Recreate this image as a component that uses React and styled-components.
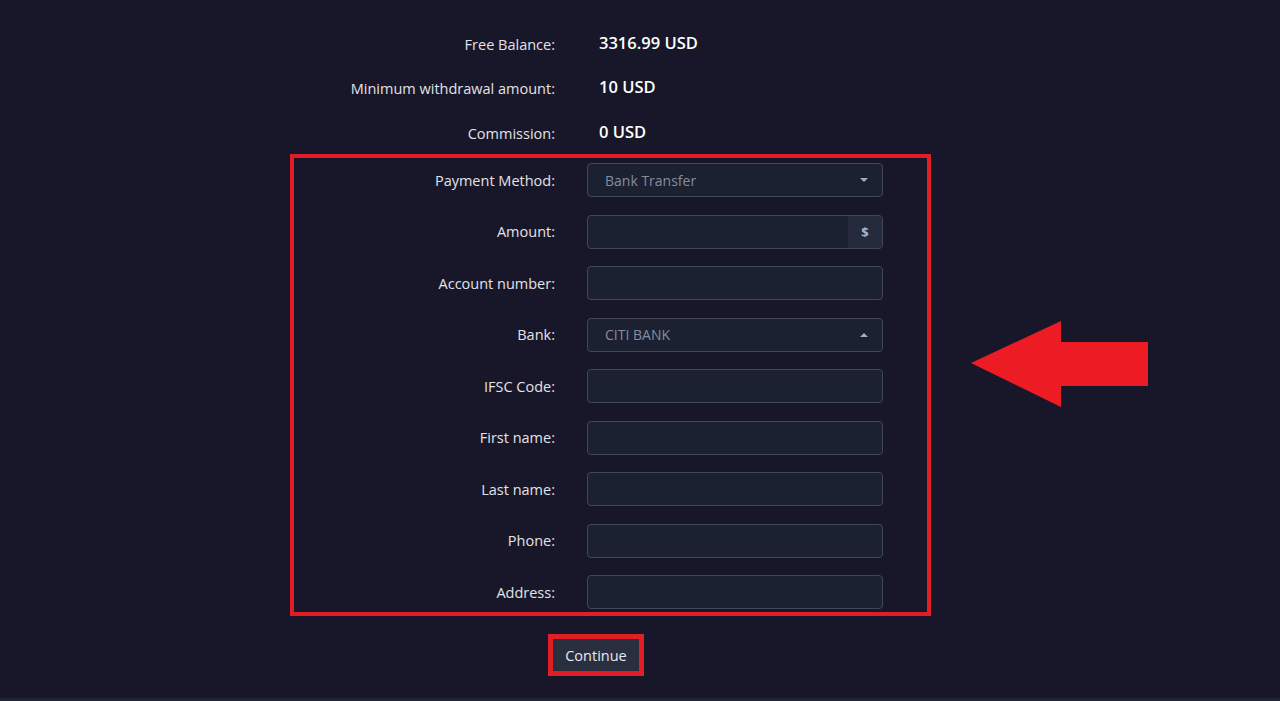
import styled, { createGlobalStyle } from "styled-components";

const GlobalStyle = createGlobalStyle`
  html, body {
    margin: 0;
    padding: 0;
    background: #181729;
  }
  * {
    box-sizing: border-box;
  }
`;

const Page = styled.div`
  min-height: 701px;
  background: #181729;
  border-bottom: 3px solid #1f2436;
  padding: 22px 0 0 290px;
  font-family: "Open Sans", "Noto Sans", sans-serif;
  color: #e4e4ea;
`;

const Info = styled.div`
  display: grid;
  grid-template-columns: 261px 1fr;
  column-gap: 44px;
  padding-left: 4px;
  width: 641px;
`;

const InfoLabel = styled.div`
  height: 44.5px;
  display: flex;
  align-items: center;
  justify-content: flex-end;
  font-size: 14.5px;
  color: #e2e2e8;
`;

const InfoValue = styled.div`
  height: 44.5px;
  display: flex;
  align-items: center;
  margin-top: -2px;
  font-size: 16.5px;
  font-weight: 600;
  color: #ffffff;
`;

const FormRow = styled.div`
  display: flex;
  align-items: flex-start;
  margin-top: -1.5px;
`;

const Highlight = styled.div`
  width: 641px;
  border: 4px solid #e11d25;
  padding: 5px 44px 3px 0;
  display: grid;
  grid-template-columns: 261px 296px;
  column-gap: 32px;
  row-gap: 17.5px;
`;

const Label = styled.label`
  height: 34px;
  display: flex;
  align-items: center;
  justify-content: flex-end;
  font-size: 14.5px;
  color: #e2e2e8;
`;

const Field = styled.div`
  height: 34px;
  display: flex;
  align-items: stretch;
  background: #1c2132;
  border: 1.5px solid #404759;
  border-radius: 4px;
  overflow: hidden;
`;

const FieldText = styled.div`
  flex: 1;
  display: flex;
  align-items: center;
  justify-content: space-between;
  padding: 0 14px 0 17px;
  font-size: 14px;
  color: #838ca0;
`;

const Addon = styled.div`
  width: 34px;
  display: flex;
  align-items: center;
  justify-content: center;
  background: #252b3c;
  font-size: 13px;
  font-weight: 700;
  color: #aeb4c2;
`;

const Caret = styled.span`
  width: 0;
  height: 0;
  border-left: 4px solid transparent;
  border-right: 4px solid transparent;
  ${(p) =>
    p.$up
      ? "border-bottom: 4px solid #a3aab8;"
      : "border-top: 4px solid #a3aab8;"}
`;

const Arrow = styled.svg`
  margin: 167px 0 0 40px;
  flex-shrink: 0;
`;

const ButtonFrame = styled.div`
  margin: 18px 0 0 258px;
  width: 96px;
  height: 42px;
  border: 5px solid #e11d25;
  display: flex;
`;

const Button = styled.button`
  flex: 1;
  background: #2a2f40;
  border: none;
  color: #e8e8ee;
  font-family: "Open Sans", "Noto Sans", sans-serif;
  font-size: 14.5px;
  padding: 0;
`;

const info = [
  ["Free Balance:", "3316.99 USD"],
  ["Minimum withdrawal amount:", "10 USD"],
  ["Commission:", "0 USD"],
];

const fields = [
  { label: "Payment Method:", value: "Bank Transfer", caret: "down" },
  { label: "Amount:", addon: "$" },
  { label: "Account number:" },
  { label: "Bank:", value: "CITI BANK", caret: "up" },
  { label: "IFSC Code:" },
  { label: "First name:" },
  { label: "Last name:" },
  { label: "Phone:" },
  { label: "Address:" },
];

export default function App() {
  return (
    <Page>
      <GlobalStyle />
      <Info>
        {info.map(([l, v]) => [
          <InfoLabel key={l}>{l}</InfoLabel>,
          <InfoValue key={l + "v"}>{v}</InfoValue>,
        ])}
      </Info>
      <FormRow>
        <Highlight>
          {fields.map((f) => [
            <Label key={f.label}>{f.label}</Label>,
            <Field key={f.label + "f"}>
              <FieldText>
                <span>{f.value || ""}</span>
                {f.caret && <Caret $up={f.caret === "up"} />}
              </FieldText>
              {f.addon && <Addon>{f.addon}</Addon>}
            </Field>,
          ])}
        </Highlight>
        <Arrow width="177" height="86" viewBox="0 0 177 86">
          <polygon
            points="0,42 90,0 90,21 177,21 177,65 90,65 90,86"
            fill="#ed1c24"
          />
        </Arrow>
      </FormRow>
      <ButtonFrame>
        <Button>Continue</Button>
      </ButtonFrame>
    </Page>
  );
}
